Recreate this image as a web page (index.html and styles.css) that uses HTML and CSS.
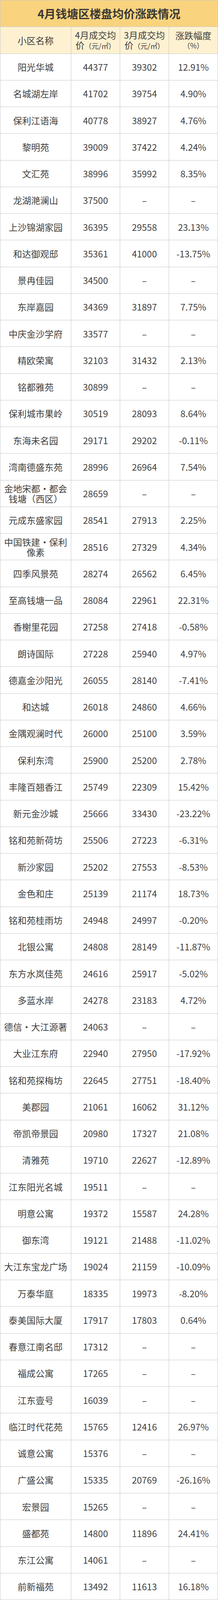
FILE: index.html
```html
<!DOCTYPE html>
<html lang="zh-CN">
<head>
<meta charset="utf-8">
<title>4月钱塘区楼盘均价涨跌情况</title>
<link rel="stylesheet" href="styles.css">
</head>
<body>
<div class="price-table">
<div class="title">4月钱塘区楼盘均价涨跌情况</div>
<div class="cell head">小区名称</div>
<div class="cell head"><div class="head-text"><span class="hl">4月成交均</span><span class="hl">价<span class="unit">（元/㎡）</span></span></div></div>
<div class="cell head"><div class="head-text"><span class="hl">3月成交均</span><span class="hl">价<span class="unit">（元/㎡）</span></span></div></div>
<div class="cell head"><div class="head-text"><span class="hl">涨跌幅度</span><span class="hl unit">（%）</span></div></div>

<div class="cell">阳光华城</div><div class="cell">44377</div><div class="cell">39302</div><div class="cell">12.91%</div>
<div class="cell">名城湖左岸</div><div class="cell">41702</div><div class="cell">39754</div><div class="cell">4.90%</div>
<div class="cell">保利江语海</div><div class="cell">40778</div><div class="cell">38927</div><div class="cell">4.76%</div>
<div class="cell">黎明苑</div><div class="cell">39009</div><div class="cell">37422</div><div class="cell">4.24%</div>
<div class="cell">文汇苑</div><div class="cell">38996</div><div class="cell">35992</div><div class="cell">8.35%</div>
<div class="cell">龙湖滟澜山</div><div class="cell">37500</div><div class="cell">–</div><div class="cell">–</div>
<div class="cell">上沙锦湖家园</div><div class="cell">36395</div><div class="cell">29558</div><div class="cell">23.13%</div>
<div class="cell">和达御观邸</div><div class="cell">35361</div><div class="cell">41000</div><div class="cell">-13.75%</div>
<div class="cell">景冉佳园</div><div class="cell">34500</div><div class="cell">–</div><div class="cell">–</div>
<div class="cell">东岸嘉园</div><div class="cell">34369</div><div class="cell">31897</div><div class="cell">7.75%</div>
<div class="cell">中庆金沙学府</div><div class="cell">33577</div><div class="cell">–</div><div class="cell">–</div>
<div class="cell">精欧荣寓</div><div class="cell">32103</div><div class="cell">31432</div><div class="cell">2.13%</div>
<div class="cell">铭都雅苑</div><div class="cell">30899</div><div class="cell">–</div><div class="cell">–</div>
<div class="cell">保利城市果岭</div><div class="cell">30519</div><div class="cell">28093</div><div class="cell">8.64%</div>
<div class="cell">东海未名园</div><div class="cell">29171</div><div class="cell">29202</div><div class="cell">-0.11%</div>
<div class="cell">湾南德盛东苑</div><div class="cell">28996</div><div class="cell">26964</div><div class="cell">7.54%</div>
<div class="cell">金地宋都·都会钱塘（西区）</div><div class="cell">28659</div><div class="cell">–</div><div class="cell">–</div>
<div class="cell">元成东盛家园</div><div class="cell">28541</div><div class="cell">27913</div><div class="cell">2.25%</div>
<div class="cell">中国铁建·保利像素</div><div class="cell">28516</div><div class="cell">27329</div><div class="cell">4.34%</div>
<div class="cell">四季风景苑</div><div class="cell">28274</div><div class="cell">26562</div><div class="cell">6.45%</div>
<div class="cell">至高钱塘一品</div><div class="cell">28084</div><div class="cell">22961</div><div class="cell">22.31%</div>
<div class="cell">香榭里花园</div><div class="cell">27258</div><div class="cell">27418</div><div class="cell">-0.58%</div>
<div class="cell">朗诗国际</div><div class="cell">27228</div><div class="cell">25940</div><div class="cell">4.97%</div>
<div class="cell">德嘉金沙阳光</div><div class="cell">26055</div><div class="cell">28140</div><div class="cell">-7.41%</div>
<div class="cell">和达城</div><div class="cell">26018</div><div class="cell">24860</div><div class="cell">4.66%</div>
<div class="cell">金隅观澜时代</div><div class="cell">26000</div><div class="cell">25100</div><div class="cell">3.59%</div>
<div class="cell">保利东湾</div><div class="cell">25900</div><div class="cell">25200</div><div class="cell">2.78%</div>
<div class="cell">丰隆百翘香江</div><div class="cell">25749</div><div class="cell">22309</div><div class="cell">15.42%</div>
<div class="cell">新元金沙城</div><div class="cell">25666</div><div class="cell">33430</div><div class="cell">-23.22%</div>
<div class="cell">铭和苑新荷坊</div><div class="cell">25506</div><div class="cell">27223</div><div class="cell">-6.31%</div>
<div class="cell">新沙家园</div><div class="cell">25202</div><div class="cell">27553</div><div class="cell">-8.53%</div>
<div class="cell">金色和庄</div><div class="cell">25139</div><div class="cell">21174</div><div class="cell">18.73%</div>
<div class="cell">铭和苑桂雨坊</div><div class="cell">24948</div><div class="cell">24997</div><div class="cell">-0.20%</div>
<div class="cell">北银公寓</div><div class="cell">24808</div><div class="cell">28149</div><div class="cell">-11.87%</div>
<div class="cell">东方水岚佳苑</div><div class="cell">24616</div><div class="cell">25917</div><div class="cell">-5.02%</div>
<div class="cell">多蓝水岸</div><div class="cell">24278</div><div class="cell">23183</div><div class="cell">4.72%</div>
<div class="cell">德信·大江源著</div><div class="cell">24063</div><div class="cell">–</div><div class="cell">–</div>
<div class="cell">大业江东府</div><div class="cell">22940</div><div class="cell">27950</div><div class="cell">-17.92%</div>
<div class="cell">铭和苑探梅坊</div><div class="cell">22645</div><div class="cell">27751</div><div class="cell">-18.40%</div>
<div class="cell">美郡园</div><div class="cell">21061</div><div class="cell">16062</div><div class="cell">31.12%</div>
<div class="cell">帝凯帝景园</div><div class="cell">20980</div><div class="cell">17327</div><div class="cell">21.08%</div>
<div class="cell">清雅苑</div><div class="cell">19710</div><div class="cell">22627</div><div class="cell">-12.89%</div>
<div class="cell">江东阳光名城</div><div class="cell">19511</div><div class="cell">–</div><div class="cell">–</div>
<div class="cell">明意公寓</div><div class="cell">19372</div><div class="cell">15587</div><div class="cell">24.28%</div>
<div class="cell">御东湾</div><div class="cell">19121</div><div class="cell">21488</div><div class="cell">-11.02%</div>
<div class="cell">大江东宝龙广场</div><div class="cell">19024</div><div class="cell">21159</div><div class="cell">-10.09%</div>
<div class="cell">万泰华庭</div><div class="cell">18335</div><div class="cell">19973</div><div class="cell">-8.20%</div>
<div class="cell">泰美国际大厦</div><div class="cell">17917</div><div class="cell">17803</div><div class="cell">0.64%</div>
<div class="cell">春意江南名邸</div><div class="cell">17312</div><div class="cell">–</div><div class="cell">–</div>
<div class="cell">福成公寓</div><div class="cell">17265</div><div class="cell">–</div><div class="cell">–</div>
<div class="cell">江东壹号</div><div class="cell">16039</div><div class="cell">–</div><div class="cell">–</div>
<div class="cell">临江时代花苑</div><div class="cell">15765</div><div class="cell">12416</div><div class="cell">26.97%</div>
<div class="cell">诚意公寓</div><div class="cell">15376</div><div class="cell">–</div><div class="cell">–</div>
<div class="cell">广盛公寓</div><div class="cell">15335</div><div class="cell">20769</div><div class="cell">-26.16%</div>
<div class="cell">宏景园</div><div class="cell">15265</div><div class="cell">–</div><div class="cell">–</div>
<div class="cell">盛都苑</div><div class="cell">14800</div><div class="cell">11896</div><div class="cell">24.41%</div>
<div class="cell">东江公寓</div><div class="cell">14061</div><div class="cell">–</div><div class="cell">–</div>
<div class="cell">前新福苑</div><div class="cell">13492</div><div class="cell">11613</div><div class="cell">16.18%</div>
</div>
</body>
</html>
```
FILE: styles.css
```css
html, body {
  margin: 0;
  padding: 0;
  background: #ffffff;
}

body {
  font-family: "Noto Sans CJK SC", "Noto Sans", sans-serif;
  color: #3f3f3f;
}

/* The capture frame is 4096px tall, so the 60 rows share that height */
.price-table {
  display: grid;
  grid-template-columns: 180px 124px 124px 124px;
  grid-auto-rows: 67.25px;
  gap: 1px;
  padding: 1px;
  width: 557px;
  box-sizing: border-box;
  background: #c8c8c8;
}

.title {
  grid-column: 1 / -1;
  display: flex;
  align-items: center;
  justify-content: center;
  background: #f9d37e;
  font-size: 29px;
  font-weight: bold;
  line-height: 1;
  color: #3b3833;
  white-space: nowrap;
}

.cell {
  display: flex;
  align-items: center;
  justify-content: center;
  text-align: center;
  padding: 0 7px;
  background: #ffffff;
  font-size: 23px;
  line-height: 26px;
  overflow: hidden;
}

.cell.head {
  background: #fdf1d1;
  padding: 0 6px;
}

.head-text {
  text-align: center;
  white-space: nowrap;
}

.hl {
  display: block;
}

.unit {
  font-size: 18px;
}
```
